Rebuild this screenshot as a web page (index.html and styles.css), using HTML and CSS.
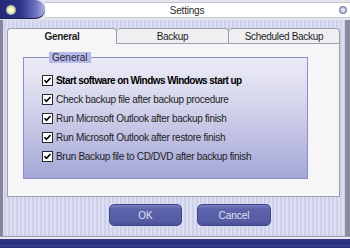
FILE: index.html
```html
<!DOCTYPE html>
<html>
<head>
<meta charset="utf-8">
<link rel="stylesheet" href="styles.css">
</head>
<body>
<div class="win">
  <div class="titlebar">
    <div class="logo"><span class="glow"></span></div>
    <div class="tbar">
      <span class="ttext">Settings</span>
      <span class="tclose"></span>
    </div>
  </div>
  <div class="main">
    <div class="tabs">
      <div class="tab active">General</div>
      <div class="tab">Backup</div>
      <div class="tab">Scheduled Backup</div>
    </div>
    <div class="panel">
      <fieldset class="group">
        <legend class="legend">General</legend>
        <div class="row bold"><span class="cb"><svg width="11" height="11" viewBox="0 0 11 11"><rect x="0.5" y="0.5" width="10" height="10" fill="#fff" stroke="#2a2a2a"/><path d="M2.5 5.2 L4.5 7.4 L8.5 3" fill="none" stroke="#000" stroke-width="1.6"/></svg></span><span class="lbl">Start software on Windws Windows start up</span></div>
        <div class="row"><span class="cb"><svg width="11" height="11" viewBox="0 0 11 11"><rect x="0.5" y="0.5" width="10" height="10" fill="#fff" stroke="#2a2a2a"/><path d="M2.5 5.2 L4.5 7.4 L8.5 3" fill="none" stroke="#000" stroke-width="1.6"/></svg></span><span class="lbl">Check backup file after backup procedure</span></div>
        <div class="row"><span class="cb"><svg width="11" height="11" viewBox="0 0 11 11"><rect x="0.5" y="0.5" width="10" height="10" fill="#fff" stroke="#2a2a2a"/><path d="M2.5 5.2 L4.5 7.4 L8.5 3" fill="none" stroke="#000" stroke-width="1.6"/></svg></span><span class="lbl">Run Microsoft Outlook after backup finish</span></div>
        <div class="row"><span class="cb"><svg width="11" height="11" viewBox="0 0 11 11"><rect x="0.5" y="0.5" width="10" height="10" fill="#fff" stroke="#2a2a2a"/><path d="M2.5 5.2 L4.5 7.4 L8.5 3" fill="none" stroke="#000" stroke-width="1.6"/></svg></span><span class="lbl">Run Microsoft Outlook after restore finish</span></div>
        <div class="row"><span class="cb"><svg width="11" height="11" viewBox="0 0 11 11"><rect x="0.5" y="0.5" width="10" height="10" fill="#fff" stroke="#2a2a2a"/><path d="M2.5 5.2 L4.5 7.4 L8.5 3" fill="none" stroke="#000" stroke-width="1.6"/></svg></span><span class="lbl">Brun Backup file to CD/DVD after backup finish</span></div>
      </fieldset>
    </div>
    <div class="buttons">
      <button class="btn ok">OK</button>
      <button class="btn cancel">Cancel</button>
    </div>
  </div>
  <div class="bottombar"></div>
</div>
</body>
</html>
```
FILE: styles.css
```css
html, body {
  margin: 0;
  padding: 0;
  background: #ffffff;
}
.win {
  width: 350px;
  height: 248px;
  display: flex;
  flex-direction: column;
  font-family: "Liberation Sans", Arial, sans-serif;
  font-size: 10px;
  color: #1a1a1a;
  background: repeating-linear-gradient(90deg, #cfd1ea 0 2px, #dcdef1 2px 4px);
  overflow: hidden;
}
.titlebar {
  height: 20px;
  display: flex;
  background: #e4e4ea;
}
.logo {
  width: 45px;
  height: 19px;
  border-radius: 0 10px 10px 0;
  background: linear-gradient(90deg, #252976 0%, #2e3284 45%, #6c72c0 80%, #b4b8e6 100%);
  display: flex;
  align-items: center;
  padding-left: 6px;
  box-sizing: border-box;
  box-shadow: inset 0 -1px 0 #1a1d5a;
}
.glow {
  width: 10px;
  height: 10px;
  border-radius: 50%;
  background: radial-gradient(circle, #ffffd0 0 25%, #e8ec9a 45%, #8e96d8 75%, rgba(80,90,180,0) 100%);
}
.tbar {
  flex: 1;
  height: 14px;
  margin-top: 2px;
  background: #ffffff;
  border-top: 1px solid #c4c4cc;
  border-bottom: 1px solid #c8c8d2;
  display: flex;
  align-items: center;
}
.ttext {
  flex: 1;
  text-align: center;
  font-size: 10px;
  color: #2a2a2a;
  padding-right: 10px;
  letter-spacing: -0.2px;
}
.tclose {
  width: 8px;
  height: 8px;
  margin-right: 3px;
  border-radius: 50%;
  background: radial-gradient(circle, #d8dcf0 0 30%, #7a82ae 60%, #9aa0c4 100%);
}
.main {
  flex: 1;
  display: flex;
  flex-direction: column;
  border-left: 3px solid #86869a;
  border-right: 5px solid #8a8a9e;
  padding: 8px 0 0 4px;
  box-sizing: border-box;
}
.tabs {
  display: flex;
  height: 16px;
  width: 333px;
}
.tab {
  height: 16px;
  box-sizing: border-box;
  border: 1px solid #9e9eaa;
  border-bottom: none;
  border-radius: 4px 4px 0 0;
  background: #efeff2;
  display: flex;
  align-items: center;
  justify-content: center;
  font-size: 10px;
  letter-spacing: -0.3px;
  color: #1e1e1e;
}
.tab:nth-child(1) { width: 110px; }
.tab:nth-child(2) { width: 112px; border-left: none; }
.tab:nth-child(3) { width: 111px; border-left: none; }
.tab:not(.active) {
  box-shadow: inset 0 -1px 0 #9e9eaa;
}
.tab.active {
  background: #f6f6f8;
  font-weight: bold;
}
.panel {
  width: 333px;
  height: 153px;
  box-sizing: border-box;
  background: #f6f6f8;
  border: 1px solid #9e9eaa;
  border-top: none;
  padding: 8px 0 0 15px;
}
.group {
  margin: 0;
  width: 285px;
  height: 127px;
  box-sizing: border-box;
  border: 1px solid #8a8ec8;
  padding: 8px 0 0 18px;
  background: linear-gradient(180deg, #ececf6 0%, #d0d0ea 45%, #a4a6d6 100%);
}
.legend {
  margin-left: 7px;
  padding: 0 3px;
  height: 11px;
  line-height: 11px;
  background: #b6baea;
  color: #2a2a3a;
  font-size: 10px;
}
.row {
  height: 19px;
  display: flex;
  align-items: center;
}
.cb {
  width: 11px;
  height: 11px;
  margin-right: 3px;
  display: flex;
}
.lbl {
  font-size: 10px;
  letter-spacing: -0.3px;
  color: #1e1e1e;
  white-space: nowrap;
}
.bold .lbl {
  font-weight: bold;
  letter-spacing: -0.55px;
  color: #000;
}
.buttons {
  display: flex;
  gap: 15px;
  padding: 7px 0 0 102px;
}
.btn {
  height: 22px;
  box-sizing: border-box;
  border: 1px solid #40458e;
  border-radius: 5px;
  background: linear-gradient(180deg, #7a80c2 0%, #5d63aa 20%, #565ca4 80%, #4a5098 100%);
  color: #dfe2f6;
  font-family: "Liberation Sans", Arial, sans-serif;
  font-size: 10px;
  padding: 0;
}
.ok { width: 73px; }
.cancel { width: 74px; }
.bottombar {
  height: 12px;
  box-sizing: border-box;
  border-top: 1px solid #9c9cb2;
  background: linear-gradient(180deg, #e8e8f2 0 2px, #34388a 2px, #2a2e7e 60%, #3c4092 80%, #24286e 100%);
}
```
